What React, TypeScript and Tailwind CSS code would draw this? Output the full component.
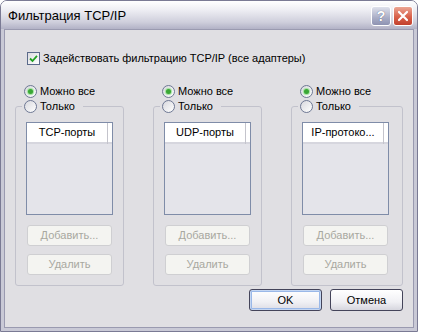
import React from "react";

function Radio({ checked }: { checked?: boolean }) {
  return (
    <span className="inline-flex h-[13px] w-[13px] shrink-0 items-center justify-center rounded-full border border-[#6e7894] bg-[linear-gradient(135deg,#d8d8de,#ffffff)]">
      {checked && <span className="h-[5px] w-[5px] rounded-full bg-[#3aa735] shadow-[0_0_1px_1px_#9ee09a]" />}
    </span>
  );
}

function DisabledButton({ label }: { label: string }) {
  return (
    <div className="flex h-[21px] w-[85px] items-center justify-center rounded-[3px] border border-[#cfcfd2] bg-[#f4f4f1] text-[#a8a8a0]">
      {label}
    </div>
  );
}

function FilterColumn({ header, wide }: { header: string; wide?: boolean }) {
  return (
    <div className={`flex flex-col ${wide ? "w-[112px]" : "w-[109px]"}`}>
      {/* первая радиокнопка */}
      <div className="flex h-[15px] items-center gap-[3px] pl-[9px]">
        <Radio checked />
        <span>Можно все</span>
      </div>

      <fieldset className="rounded-[3px] border border-[#c2c2cc] px-0 pb-[10px]">
        <legend className="ml-[6px] flex h-[14px] items-center gap-[3px] pl-[2px] pr-[8px]">
          <Radio />
          <span>Только</span>
        </legend>

        {/* список */}
        <div className="ml-[10px] mt-[9px] h-[93px] w-[87px] border border-[#7f8ca8] bg-[#e4e4ea]">
          <div className="flex h-[21px] bg-white shadow-[inset_0_-2px_0_#d6d6de]">
            <div className="flex w-[81px] items-center justify-center border-r border-[#c4c4cc] pb-[2px] text-black">
              {header}
            </div>
          </div>
        </div>

        <div className="ml-[11px] mt-[10px] flex flex-col gap-[8px]">
          <DisabledButton label="Добавить..." />
          <DisabledButton label="Удалить" />
        </div>
      </fieldset>
    </div>
  );
}

export default function App() {
  return (
    <div className="h-[336px] w-[421px] bg-white font-['Liberation_Sans',Arial,sans-serif] text-[11px] leading-[13px] text-black">
      <div className="flex h-[332px] w-[418px] flex-col overflow-hidden rounded-t-[7px] border border-[#7a7a94]">
        {/* заголовок окна */}
        <div className="flex h-[28px] shrink-0 items-start bg-[linear-gradient(to_bottom,#ffffff,#ececf2_35%,#cfcfdc_75%,#b2b2c6)] pr-[4px]">
          <span className="mt-[7px] pl-[7px] text-[13px] leading-[15px] text-black">Фильтрация TCP/IP</span>
          <div className="ml-auto mt-[5px] flex gap-[2px]">
            <div className="flex h-[20px] w-[20px] items-center justify-center rounded-[3px] border border-white bg-[linear-gradient(to_bottom,#dfe1ec,#a9adc6_60%,#8e93b2)] text-[14px] font-bold leading-none text-white [text-shadow:0_0_1px_#4a4f70]">
              ?
            </div>
            <div className="flex h-[20px] w-[20px] items-center justify-center rounded-[3px] border border-white bg-[linear-gradient(to_bottom,#eba593,#d8604a_55%,#c2402e)]">
              <svg width="12" height="12" viewBox="0 0 12 12">
                <path d="M2 2 L10 10 M10 2 L2 10" stroke="white" strokeWidth="2.2" strokeLinecap="round" />
              </svg>
            </div>
          </div>
        </div>

        {/* рамка окна */}
        <div className="flex flex-1 bg-[#c9c9d6] px-[3px] pb-[3px]">
          <div className="flex flex-1 flex-col border border-[#9a9ab0] bg-[#e0dfe3]">
            <div className="ml-[22px] mt-[22px] flex h-[13px] items-center gap-[3px]">
              <span className="flex h-[13px] w-[13px] items-center justify-center border border-[#5b6a8a] bg-[linear-gradient(135deg,#dcdce0,#ffffff)]">
                <svg width="9" height="9" viewBox="0 0 9 9">
                  <path d="M1 4.5 L3.5 7 L8 1.8" fill="none" stroke="#21a121" strokeWidth="1.8" />
                </svg>
              </span>
              <span>Задействовать фильтрацию TCP/IP (все адаптеры)</span>
            </div>

            <div className="ml-[10px] mt-[19px] flex gap-[29px]">
              <FilterColumn header="TCP-порты" />
              <FilterColumn header="UDP-порты" />
              <FilterColumn header="IP-протоко..." wide />
            </div>

            <div className="mr-[10px] mt-[3px] flex justify-end gap-[8px]">
              <button className="h-[22px] w-[73px] rounded-[3px] border border-[#44445a] bg-[linear-gradient(to_bottom,#ffffff,#f0f0f4_60%,#dcdce4)] shadow-[inset_0_0_0_1px_#c4d6f2,inset_0_0_0_2px_#9ab8e8]">
                OK
              </button>
              <button className="h-[22px] w-[73px] rounded-[3px] border border-[#44445a] bg-[linear-gradient(to_bottom,#ffffff,#f0f0f4_60%,#d6d6de)]">
                Отмена
              </button>
            </div>
          </div>
        </div>
      </div>
    </div>
  );
}
